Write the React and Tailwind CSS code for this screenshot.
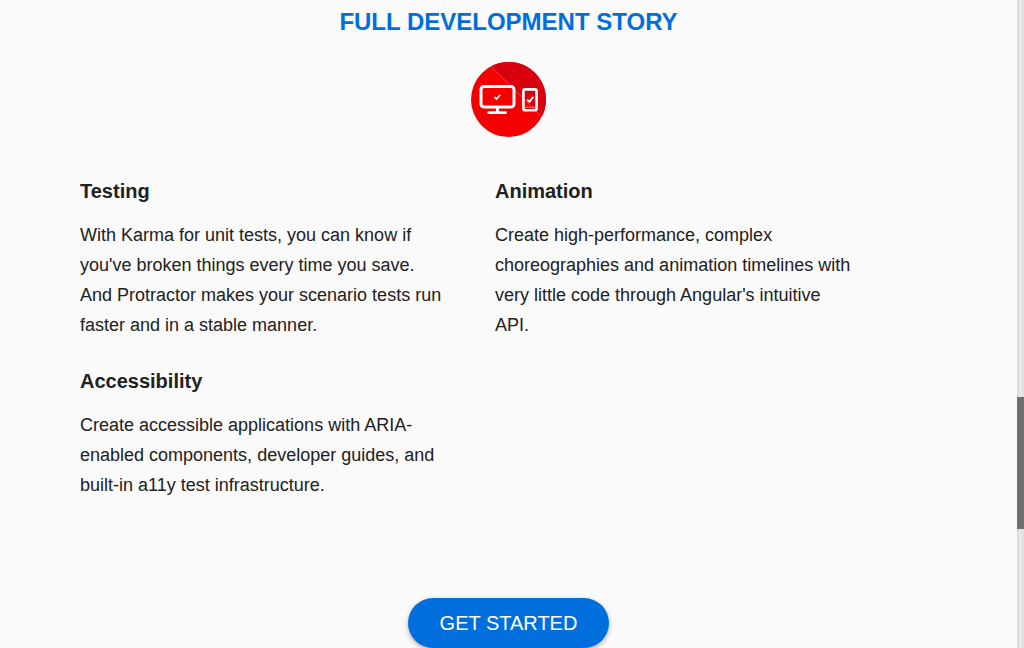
const features = [
  {
    title: "Testing",
    text: "With Karma for unit tests, you can know if you've broken things every time you save. And Protractor makes your scenario tests run faster and in a stable manner.",
  },
  {
    title: "Animation",
    text: "Create high-performance, complex choreographies and animation timelines with very little code through Angular's intuitive API.",
  },
  {
    title: "Accessibility",
    text: "Create accessible applications with ARIA-enabled components, developer guides, and built-in a11y test infrastructure.",
  },
];

function StoryIcon() {
  return (
    <svg viewBox="0 0 75 75" className="size-[75px]" fill="none" aria-hidden="true">
      <circle cx="37.5" cy="37.5" r="37.5" fill="#f50000" />
      <path d="M20 4.3A37.5 37.5 0 0 1 70.8 54.8Z" fill="#d9000f" />
      <path d="M20 4.3L70.8 54.8" stroke="#ff8585" strokeWidth="0.5" />
      <rect x="10" y="24.5" width="33" height="20.5" rx="3" stroke="#fff" strokeWidth="3" />
      <path d="M26.4 45.5v4.5" stroke="#fff" strokeWidth="3" />
      <path d="M17.8 50.6h16.8" stroke="#fff" strokeWidth="2.8" strokeLinecap="round" />
      <path d="M23.4 35l2.1 2.1 3.9-4.4" stroke="#fff" strokeWidth="1.7" />
      <rect x="52.4" y="27.4" width="13.2" height="20.8" rx="1.8" stroke="#fff" strokeWidth="2.6" />
      <path d="M53.5 45.2h11" stroke="#fff" strokeWidth="0.8" strokeOpacity="0.65" />
      <path d="M56.2 37.5l2.2 2.3 4-4.9" stroke="#fff" strokeWidth="1.8" />
    </svg>
  );
}

function Feature({ title, text }) {
  return (
    <article>
      <h3 className="text-xl leading-[30px] font-semibold">{title}</h3>
      <p className="mt-3.5 pr-3 text-lg leading-[30px]">{text}</p>
    </article>
  );
}

export default function App() {
  return (
    <div className="flex min-h-screen bg-[#fafafa] font-['Liberation_Sans',Arial,sans-serif] text-[#212121]">
      <main className="flex min-w-0 flex-1 flex-col items-center overflow-hidden">
        <h2 className="pt-1 text-center text-2xl leading-9 font-semibold text-[#006fdd]">
          FULL DEVELOPMENT STORY
        </h2>
        <div className="mt-[22px]">
          <StoryIcon />
        </div>
        <section className="mt-[39px] w-full px-20">
          <div className="grid max-w-[790px] grid-cols-2 gap-x-10 gap-y-[26px]">
            {features.map((feature) => (
              <Feature key={feature.title} {...feature} />
            ))}
          </div>
        </section>
        <a
          href="#get-started"
          className="mt-[98px] flex h-[50px] items-center rounded-full bg-[#006fdd] px-8 text-xl text-white shadow-[0_2px_5px_rgba(0,0,0,0.3)]"
        >
          GET STARTED
        </a>
      </main>
      <div
        className="flex w-[7px] flex-col bg-linear-to-r from-[#d6d6d6] via-[#e8e8e8] to-[#dedede]"
        aria-hidden="true"
      >
        <div className="grow-397" />
        <div className="grow-132 bg-[#6e6e6e]" />
        <div className="grow-119" />
      </div>
    </div>
  );
}
